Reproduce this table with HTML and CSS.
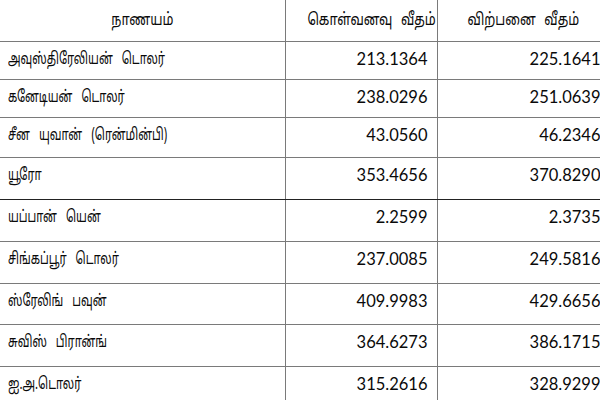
FILE: index.html
```html
<!DOCTYPE html>
<html lang="ta">
<head>
<meta charset="utf-8">
<link rel="stylesheet" href="styles.css">
</head>
<body>
<table class="rates">
  <colgroup>
    <col class="c-name"><col class="c-buy"><col class="c-sell">
  </colgroup>
  <thead>
    <tr class="h">
      <th><span class="ta">நாணயம்</span></th>
      <th><span class="ta">கொள்வனவு வீதம்</span></th>
      <th><span class="ta">விற்பனை வீதம்</span></th>
    </tr>
  </thead>
  <tbody>
    <tr class="r38"><td class="name"><span class="ta">அவுஸ்திரேலியன் டொலர்</span></td><td class="num">213.1364</td><td class="num">225.1641</td></tr>
    <tr class="r38"><td class="name"><span class="ta">கனேடியன் டொலர்</span></td><td class="num">238.0296</td><td class="num">251.0639</td></tr>
    <tr class="r40"><td class="name"><span class="ta">சீன யுவான் (ரென்மின்பி)</span></td><td class="num">43.0560</td><td class="num">46.2346</td></tr>
    <tr class="r42 dark"><td class="name"><span class="ta">யூரோ</span></td><td class="num">353.4656</td><td class="num">370.8290</td></tr>
    <tr class="r42"><td class="name"><span class="ta">யப்பான் யென்</span></td><td class="num">2.2599</td><td class="num">2.3735</td></tr>
    <tr class="r42"><td class="name"><span class="ta">சிங்கப்பூர் டொலர்</span></td><td class="num">237.0085</td><td class="num">249.5816</td></tr>
    <tr class="r41"><td class="name"><span class="ta">ஸ்ரேலிங் பவுன்</span></td><td class="num">409.9983</td><td class="num">429.6656</td></tr>
    <tr class="r42"><td class="name"><span class="ta">சுவிஸ் பிரான்ங்</span></td><td class="num">364.6273</td><td class="num">386.1715</td></tr>
    <tr class="r42 last"><td class="name"><span class="ta">ஐ.அ.டொலர்</span></td><td class="num">315.2616</td><td class="num">328.9299</td></tr>
  </tbody>
</table>
</body>
</html>
```

FILE: styles.css
```css
html, body {
  margin: 0;
  padding: 0;
  background: #ffffff;
}
body {
  width: 600px;
  height: 400px;
  overflow: hidden;
}
.rates {
  border-collapse: collapse;
  table-layout: fixed;
  width: 610px;
  color: #0a0a0a;
}
.c-name { width: 285px; }
.c-buy { width: 152px; }
.c-sell { width: 173px; }
.rates th, .rates td {
  box-sizing: border-box;
  border-right: 1px solid #7a7a7a;
  border-bottom: 1px solid #7a7a7a;
  padding: 0;
  vertical-align: top;
  line-height: 20px;
  overflow: hidden;
}
.ta {
  display: inline-block;
  white-space: nowrap;
  font-family: "Noto Sans Tamil", "Lohit Tamil", "Noto Sans", sans-serif;
}
.rates th {
  height: 41px;
  font-weight: normal;
  text-align: center;
  padding-top: 10px;
}
.rates th .ta {
  font-size: 17px;
  word-spacing: 7px;
  transform: scaleX(0.75);
  transform-origin: center;
}
.rates td.name {
  padding: 7px 0 0 8px;
  white-space: nowrap;
}
.rates td.name .ta {
  font-size: 16.5px;
  word-spacing: 9px;
  transform: scaleX(0.68);
  transform-origin: left center;
}
.rates td.num {
  font-family: Lato, "Open Sans", sans-serif;
  font-size: 16.5px;
  text-align: right;
  padding: 7px 9px 0 0;
}
.r38 td { height: 38px; }
.r40 td { height: 40px; }
.r41 td { height: 41px; }
.r42 td { height: 42px; }
.rates tr.dark td { border-bottom-color: #222; }
.rates tr.last td { border-bottom: none; }
```
